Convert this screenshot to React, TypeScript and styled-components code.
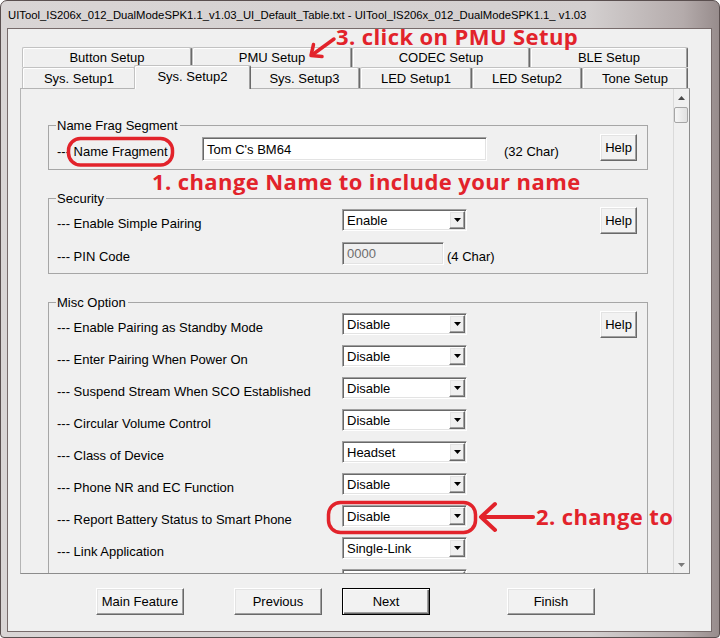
import React from 'react';
import styled, { createGlobalStyle, css } from 'styled-components';

const UI_FONT = `"Liberation Sans", Arial, sans-serif`;
const NOTE_FONT = `"Open Sans", "Noto Sans", sans-serif`;
const RED = '#e2232b';

const GlobalStyle = createGlobalStyle`
  *, *::before, *::after { box-sizing: border-box; }
  html, body { margin: 0; padding: 0; background: #ffffff; }
  body { font-family: ${UI_FONT}; font-size: 13px; color: #000; }
`;

const raised = css`
  border: 1px solid;
  border-color: #ffffff #696969 #696969 #ffffff;
  box-shadow: inset -1px -1px 0 #a0a0a0, inset 1px 1px 0 #e3e3e3;
`;

const sunken = css`
  border: 1px solid;
  border-color: #a0a0a0 #ffffff #ffffff #a0a0a0;
  box-shadow: inset 1px 1px 0 #696969, inset -1px -1px 0 #e3e3e3;
`;

/* ---------- window chrome ---------- */

const Window = styled.div`
  position: relative;
  width: 720px;
  height: 638px;
  display: flex;
  flex-direction: column;
  border: 1px solid #5a4f4f;
  border-radius: 7px 7px 4px 4px;
  padding: 0 7px 5px 6px;
  background: linear-gradient(to right, #d9d5d5 0%, #d3cfcf 82%, #b4abab 95%, #978c8c 100%);
  overflow: hidden;
`;

const TitleBar = styled.div`
  height: 27px;
  flex: none;
  display: flex;
  align-items: center;
  padding-left: 1px;
  font-family: ${UI_FONT};
  font-size: 11.3px;
  color: #000;
  white-space: nowrap;
`;

const Client = styled.div`
  flex: 1;
  min-height: 0;
  border: 1px solid #776b6b;
  background: #f0f0f0;
  display: flex;
  flex-direction: column;
  padding: 18px 0 0 12px;
`;

/* ---------- tab control ---------- */

const TabControl = styled.div`
  width: 670px;
  display: flex;
  flex-direction: column;
`;

const TabRow = styled.div<{ $h: number }>`
  display: flex;
  height: ${(p) => p.$h}px;
  padding-left: 2px;
`;

const Tab = styled.div<{ $w: number; $active?: boolean }>`
  flex: none;
  width: ${(p) => p.$w}px;
  height: 100%;
  display: flex;
  align-items: center;
  justify-content: center;
  background: #f0f0f0;
  border-top: 1px solid #c2c2c2;
  border-left: 1px solid #c2c2c2;
  border-right: 1px solid #696969;
  box-shadow: inset -1px 0 0 #a0a0a0, inset 1px 1px 0 #ffffff;
  border-radius: 2px 2px 0 0;
  font-size: 13px;
  line-height: 15px;
  white-space: nowrap;
  ${(p) =>
    p.$active &&
    css`
      position: relative;
      z-index: 1;
      width: ${p.$w + 4}px;
      height: calc(100% + 3px);
      margin: -2px -2px -1px;
      padding-bottom: 3px;
    `}
`;

const Panel = styled.div`
  height: 486px;
  display: flex;
  border: 1px solid;
  border-color: #b4b4b4 #8c8c8c #8c8c8c #b4b4b4;
  background: #f0f0f0;
`;

const ScrollView = styled.div`
  flex: 1;
  min-width: 0;
  overflow: hidden;
  display: flex;
  flex-direction: column;
  gap: 21px;
  padding: 29px 25px 0 27px;
`;

/* ---------- scrollbar ---------- */

const ScrollBar = styled.div`
  width: 16px;
  flex: none;
  display: flex;
  flex-direction: column;
  border-left: 1px solid #dadada;
  background: #f0f0f0;
`;

const ScrollArrow = styled.div<{ $h: number }>`
  height: ${(p) => p.$h}px;
  display: flex;
  align-items: center;
  justify-content: center;
`;

const ScrollTrack = styled.div`
  flex: 1;
`;

const Thumb = styled.div`
  width: 14px;
  height: 16px;
  border: 1px solid #a5a5a5;
  border-radius: 2px;
  background: linear-gradient(to right, #f6f6f6, #e0e0e0);
`;

/* ---------- group boxes ---------- */

const Group = styled.fieldset`
  flex: none;
  margin: 0;
  min-width: 0;
  padding: 1px 10px 8px 8px;
  border: 1px solid #a6a6a6;
`;

const Legend = styled.legend`
  padding: 0 2px 0 1px;
  margin-left: -1px;
  font-size: 13px;
  line-height: 15px;
`;

const GroupBody = styled.div`
  display: flex;
  align-items: flex-start;
  justify-content: space-between;
`;

const Rows = styled.div<{ $gap: number; $top: number }>`
  display: flex;
  flex-direction: column;
  gap: ${(p) => p.$gap}px;
  padding-top: ${(p) => p.$top}px;
`;

const Row = styled.div<{ $h: number }>`
  display: flex;
  align-items: center;
  height: ${(p) => p.$h}px;
`;

const Label = styled.div<{ $w: number }>`
  flex: none;
  width: ${(p) => p.$w}px;
  align-self: flex-start;
  margin-top: 7px;
  line-height: 15px;
  font-size: 13px;
  white-space: nowrap;
`;

const Note = styled.div<{ $gap: number }>`
  align-self: flex-start;
  margin: 7px 0 0 ${(p) => p.$gap}px;
  line-height: 15px;
  font-size: 13px;
  white-space: nowrap;
`;

const Field = styled.div<{ $w: number; $h: number; $disabled?: boolean }>`
  ${sunken};
  flex: none;
  width: ${(p) => p.$w}px;
  height: ${(p) => p.$h}px;
  display: flex;
  align-items: center;
  padding-left: 4px;
  background: ${(p) => (p.$disabled ? '#f0f0f0' : '#ffffff')};
  color: ${(p) => (p.$disabled ? '#6d6d6d' : '#000')};
  font-size: 13px;
  white-space: nowrap;
`;

const ComboBox = styled.div`
  ${sunken};
  flex: none;
  width: 125px;
  height: 22px;
  display: flex;
  align-items: center;
  padding-left: 4px;
  background: #ffffff;
  font-size: 13px;
`;

const ComboValue = styled.span`
  flex: 1;
  white-space: nowrap;
`;

const DropButton = styled.div`
  ${raised};
  flex: none;
  width: 16px;
  height: 18px;
  margin-right: 1px;
  display: flex;
  align-items: center;
  justify-content: center;
  background: #f0f0f0;
`;

const HelpButton = styled.div`
  ${raised};
  flex: none;
  width: 37px;
  height: 27px;
  display: flex;
  align-items: center;
  justify-content: center;
  background: #f2f2f2;
  font-size: 13px;
`;

/* ---------- bottom buttons ---------- */

const ButtonRow = styled.div`
  display: flex;
  margin-top: 14px;
`;

const DialogButton = styled.div<{ $gap: number; $default?: boolean }>`
  ${raised};
  flex: none;
  width: 88px;
  height: 27px;
  margin-left: ${(p) => p.$gap}px;
  display: flex;
  align-items: center;
  justify-content: center;
  background: #f2f2f2;
  font-size: 13px;
  ${(p) =>
    p.$default &&
    css`
      border: 1px solid #000;
      box-shadow: inset 1px 1px 0 #ffffff, inset -1px -1px 0 #696969, inset -2px -2px 0 #a0a0a0;
    `}
`;

/* ---------- annotations ---------- */

const Overlay = styled.div`
  position: absolute;
  top: -1px;
  left: -1px;
  width: 720px;
  height: 638px;
  pointer-events: none;
`;

const Marks = styled.svg`
  position: absolute;
  top: 0;
  left: 0;
`;

const Callout = styled.div<{ $x: number; $y: number }>`
  position: absolute;
  left: ${(p) => p.$x}px;
  top: ${(p) => p.$y}px;
  font-family: ${NOTE_FONT};
  font-weight: 700;
  font-size: 22px;
  line-height: 20px;
  letter-spacing: 0.4px;
  color: ${RED};
  white-space: nowrap;
`;

/* ---------- small drawings ---------- */

const Caret = ({ up, color }: { up?: boolean; color: string }) => (
  <svg width="7" height="4" viewBox="0 0 7 4">
    <path d={up ? 'M0 4 L3.5 0 L7 4 Z' : 'M0 0 L7 0 L3.5 4 Z'} fill={color} />
  </svg>
);

const Combo = ({ value }: { value: string }) => (
  <ComboBox>
    <ComboValue>{value}</ComboValue>
    <DropButton>
      <Caret color="#000" />
    </DropButton>
  </ComboBox>
);

/* ---------- data ---------- */

const backTabs = [
  { label: 'Button Setup', w: 170 },
  { label: 'PMU Setup', w: 160 },
  { label: 'CODEC Setup', w: 178 },
  { label: 'BLE Setup', w: 158 },
];

const frontTabs = [
  { label: 'Sys. Setup1', w: 114 },
  { label: 'Sys. Setup2', w: 113, active: true },
  { label: 'Sys. Setup3', w: 111 },
  { label: 'LED Setup1', w: 112 },
  { label: 'LED Setup2', w: 110 },
  { label: 'Tone Setup', w: 106 },
];

const miscRows = [
  { label: '--- Enable Pairing as Standby Mode', value: 'Disable' },
  { label: '--- Enter Pairing When Power On', value: 'Disable' },
  { label: '--- Suspend Stream When SCO Established', value: 'Disable' },
  { label: '--- Circular Volume Control', value: 'Disable' },
  { label: '--- Class of Device', value: 'Headset' },
  { label: '--- Phone NR and EC Function', value: 'Disable' },
  { label: '--- Report Battery Status to Smart Phone', value: 'Disable' },
  { label: '--- Link Application', value: 'Single-Link' },
  { label: '', value: '' },
];

export default function App() {
  return (
    <>
      <GlobalStyle />
      <Window>
        <TitleBar>
          UITool_IS206x_012_DualModeSPK1.1_v1.03_UI_Default_Table.txt - UITool_IS206x_012_DualModeSPK1.1_ v1.03
        </TitleBar>
        <Client>
          <TabControl>
            <TabRow $h={20}>
              {backTabs.map((t) => (
                <Tab key={t.label} $w={t.w}>
                  {t.label}
                </Tab>
              ))}
            </TabRow>
            <TabRow $h={21}>
              {frontTabs.map((t) => (
                <Tab key={t.label} $w={t.w} $active={t.active}>
                  {t.label}
                </Tab>
              ))}
            </TabRow>
            <Panel>
              <ScrollView>
                <Group>
                  <Legend>Name Frag Segment</Legend>
                  <GroupBody>
                    <Rows $gap={0} $top={3}>
                      <Row $h={24}>
                        <Label $w={145}>--- Name Fragment</Label>
                        <Field $w={285} $h={24}>
                          Tom C's BM64
                        </Field>
                        <Note $gap={17}>(32 Char)</Note>
                      </Row>
                    </Rows>
                    <HelpButton>Help</HelpButton>
                  </GroupBody>
                </Group>

                <Group>
                  <Legend>Security</Legend>
                  <GroupBody>
                    <Rows $gap={11} $top={2}>
                      <Row $h={22}>
                        <Label $w={285}>--- Enable Simple Pairing</Label>
                        <Combo value="Enable" />
                      </Row>
                      <Row $h={23}>
                        <Label $w={285}>--- PIN Code</Label>
                        <Field $w={102} $h={23} $disabled>
                          0000
                        </Field>
                        <Note $gap={3}>(4 Char)</Note>
                      </Row>
                    </Rows>
                    <HelpButton>Help</HelpButton>
                  </GroupBody>
                </Group>

                <Group>
                  <Legend>Misc Option</Legend>
                  <GroupBody>
                    <Rows $gap={10} $top={2}>
                      {miscRows.map((r, i) => (
                        <Row key={i} $h={22}>
                          <Label $w={285}>{r.label}</Label>
                          <Combo value={r.value} />
                        </Row>
                      ))}
                    </Rows>
                    <HelpButton>Help</HelpButton>
                  </GroupBody>
                </Group>
              </ScrollView>
              <ScrollBar>
                <ScrollArrow $h={18}>
                  <Caret up color="#4a4a4a" />
                </ScrollArrow>
                <Thumb />
                <ScrollTrack />
                <ScrollArrow $h={17}>
                  <Caret color="#7a7a7a" />
                </ScrollArrow>
              </ScrollBar>
            </Panel>
          </TabControl>
          <ButtonRow>
            <DialogButton $gap={76}>Main Feature</DialogButton>
            <DialogButton $gap={50}>Previous</DialogButton>
            <DialogButton $gap={20} $default>
              Next
            </DialogButton>
            <DialogButton $gap={77}>Finish</DialogButton>
          </ButtonRow>
        </Client>

        <Overlay>
          <Marks width="720" height="638" viewBox="0 0 720 638" fill="none">
            <g stroke={RED} strokeWidth={3.5} strokeLinecap="round" strokeLinejoin="round">
              <rect x="68.5" y="138.5" width="104" height="26.5" rx="12" />
              <rect x="328.5" y="502.5" width="147" height="30" rx="12" />
              <line x1="533" y1="517" x2="482" y2="517" strokeWidth={4} />
              <polyline points="495,504 481,517 495,530" strokeWidth={4} />
              <line x1="334" y1="39" x2="312" y2="55" />
              <polyline points="313.5,44.5 311,55.5 322,56.5" />
            </g>
          </Marks>
          <Callout $x={336} $y={26}>3. click on PMU Setup</Callout>
          <Callout $x={152} $y={171}>1. change Name to include your name</Callout>
          <Callout $x={536} $y={506}>2. change to</Callout>
        </Overlay>
      </Window>
    </>
  );
}
